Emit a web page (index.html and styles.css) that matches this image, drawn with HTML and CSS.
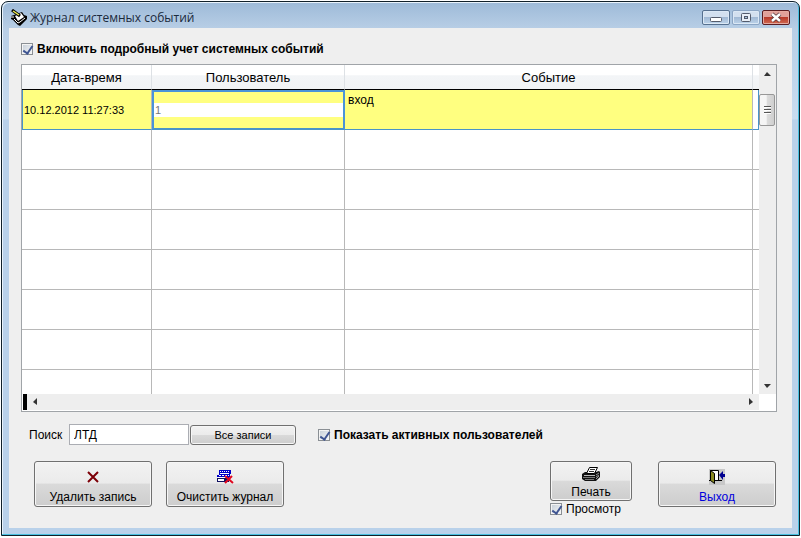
FILE: index.html
```html
<!DOCTYPE html>
<html lang="ru">
<head>
    <meta charset="utf-8">
    <title>Журнал системных событий</title>
    <link rel="stylesheet" href="styles.css">
</head>
<body>
    <div class="window">
        <div class="titlebar">
            <svg class="title-icon" width="18" height="18" viewBox="0 0 18 18">
                <path d="M1 7l3-1 8-3 2 3 3 1v3l-7 7-2-1-5-5-2-1z" fill="#000"/>
                <path d="M5 7l6-3 3 4-6 4z" fill="#fff"/>
                <path d="M4 10l4 4 2-1M10 13l5-4" stroke="#fff" fill="none"/>
                <path d="M1 8h3" stroke="#fff"/>
                <path d="M2 1l8 6" stroke="#000" stroke-width="3"/>
                <path d="M3 2l6 4" stroke="#f0ee50" stroke-width="1.500"/>
            </svg>
            <h1 class="title">Журнал системных событий</h1>
            <div class="window-buttons">
                <button class="win-btn" aria-label="Свернуть">
                    <svg width="26" height="13" viewBox="0 0 26 13"><rect x="7.500" y="6.500" width="11" height="4" rx="1" fill="#fff" stroke="#555c6b"/></svg>
                </button>
                <button class="win-btn muted" aria-label="Развернуть">
                    <svg width="26" height="13" viewBox="0 0 26 13"><rect x="8.500" y="2.500" width="9" height="8" rx="1" fill="#e8eef6" stroke="#535b6c"/><rect x="11.500" y="5.500" width="3" height="2" fill="#a9c3de" stroke="#535b6c"/></svg>
                </button>
                <button class="win-btn close" aria-label="Закрыть">
                    <svg width="26" height="13" viewBox="0 0 26 13"><path d="M9 3l8 7M17 3l-8 7" stroke="#54343a" stroke-width="4"/><path d="M9 3l8 7M17 3l-8 7" stroke="#fff" stroke-width="2.500"/></svg>
                </button>
            </div>
        </div>

        <div class="client">
            <label class="check bold"><input type="checkbox" checked>Включить подробный учет системных событий</label>

            <div class="grid-frame">
                <div class="grid-view">
                    <table class="grid">
                        <colgroup><col class="col-date"><col class="col-user"><col><col class="col-end"></colgroup>
                        <thead>
                            <tr><th>Дата-время</th><th>Пользователь</th><th>Событие</th><th class="end"></th></tr>
                        </thead>
                        <tbody>
                            <tr class="current">
                                <td class="date">10.12.2012 11:27:33</td>
                                <td class="user"><input class="cell-input" type="text" value="1" aria-label="Пользователь"></td>
                                <td class="event">вход</td>
                                <td class="end"></td>
                            </tr>
                            <tr><td></td><td></td><td></td><td class="end"></td></tr>
                            <tr><td></td><td></td><td></td><td class="end"></td></tr>
                            <tr><td></td><td></td><td></td><td class="end"></td></tr>
                            <tr><td></td><td></td><td></td><td class="end"></td></tr>
                            <tr><td></td><td></td><td></td><td class="end"></td></tr>
                            <tr><td></td><td></td><td></td><td class="end"></td></tr>
                            <tr class="last"><td></td><td></td><td></td><td class="end"></td></tr>
                        </tbody>
                    </table>
                    <div class="vscroll">
                        <svg width="17" height="17" viewBox="0 0 17 17"><path d="M5 11l3-4 4 4z" fill="#333"/></svg>
                        <div class="thumb"><i></i><i></i><i></i></div>
                        <svg class="arrow-end" width="17" height="17" viewBox="0 0 17 17"><path d="M5 7h7l-4 4z" fill="#333"/></svg>
                    </div>
                </div>
                <div class="hscroll">
                    <span class="split"></span>
                    <div class="track">
                        <svg width="17" height="16" viewBox="0 0 17 16"><path d="M10 4v7l-4-3z" fill="#333"/></svg>
                        <svg width="17" height="16" viewBox="0 0 17 16"><path d="M7 4v7l4-3z" fill="#333"/></svg>
                    </div>
                </div>
            </div>

            <div class="search-row">
                <label class="search-label" for="search">Поиск</label>
                <input class="search" id="search" type="text" value="ЛТД">
                <button class="btn small">Все записи</button>
                <label class="check bold"><input type="checkbox" checked>Показать активных пользователей</label>
            </div>

            <div class="actions">
                <button class="btn big">
                    <svg width="16" height="16" viewBox="0 0 16 16"><path d="M3 3l10 10M13 3l-10 10" stroke="#7d0008" stroke-width="2"/></svg>
                    Удалить запись
                </button>
                <button class="btn big">
                    <svg width="18" height="16" viewBox="0 0 18 16">
                        <path d="M3 1h12v4h-1v3h-1v4H2V8h-1V6h2z" fill="#0000c8"/>
                        <path d="M2 9h11v4H1V9z" fill="#101060"/>
                        <path d="M4 2h1v1h-1zM6 2h1v1h-1zM8 2h1v1h-1zM10 2h1v1h-1zM12 2h1v1h-1zM3 6h2v1h-2zM6 6h2v1h-2zM9 6h2v1h-2zM12 6h1v1h-1zM4 4h9v1h-9zM2 8h10v1h-10zM2 10h6v2h-6z" fill="#fff"/>
                        <path d="M9 7l8 7M16 7l-7 7" stroke="#e00820" stroke-width="2" fill="none"/>
                    </svg>
                    Очистить журнал
                </button>
                <div class="print-group">
                    <button class="btn print">
                        <svg width="20" height="16" viewBox="0 0 20 16">
                            <path d="M1 8l3-2h11l3-1 1 1v5l-4 4H4l-3-2z" fill="#111"/>
                            <path d="M5.500 7.500l3-6h8l-3 6z" fill="#fff" stroke="#000"/>
                            <path d="M9 3.500h5M8 5.500h5" stroke="#333"/>
                            <path d="M3 9.500h11" stroke="#b8b8b8"/>
                            <path d="M2 11.500h12M4 13.500h9" stroke="#777"/>
                            <path d="M15 9l3-2M15 11l3-2M15 13l3-3" stroke="#999"/>
                        </svg>
                        Печать
                    </button>
                    <label class="check"><input type="checkbox" checked>Просмотр</label>
                </div>
                <button class="btn big exit">
                    <svg width="16" height="16" viewBox="0 0 16 16">
                        <path d="M0 0h16v16H0z" fill="#c8c8c8"/>
                        <path d="M1.500 1.500h8v10h-8z" fill="#fff" stroke="#000"/>
                        <path d="M0 11.500h3M8 11.500h5" stroke="#000"/>
                        <path d="M1.500 1.500l4 3v10l-4-3z" fill="#8a8a20" stroke="#000"/>
                        <path d="M10 6l4-4v3h2v3h-2v3z" fill="#000090"/>
                    </svg>
                    Выход
                </button>
            </div>
        </div>
    </div>
</body>
</html>
```
FILE: styles.css
```css
* {
    box-sizing: border-box;
}

body {
    margin: 0;
    padding: 1px 1px 2px;
    min-height: 100vh;
    display: flex;
    background: #fff;
    font-family: "Liberation Sans", Arial, sans-serif;
    font-size: 12px;
    color: #000;
}

button,
input {
    font-family: inherit;
    font-size: inherit;
    color: inherit;
    margin: 0;
}

.window {
    flex: 1;
    display: flex;
    flex-direction: column;
    padding: 0 7px 7px;
    border: 1px solid #10202a;
    border-radius: 7px 7px 0 0;
    background: linear-gradient(#9dbad8, #b9cfe6 28px, #c8dcf0 117px, #b9d1ea 118px);
    box-shadow: inset -1px -1px #48c0e0, inset 1px 1px #e9f3fc;
}

/* Title bar */
.titlebar {
    display: flex;
    align-items: center;
    height: 26px;
    padding: 5px 2px 0 1px;
}

.title {
    flex: 1;
    margin: 0 0 0 2px;
    font-family: "Open Sans", "Noto Sans", sans-serif;
    font-size: 12px;
    line-height: 20px;
    font-weight: normal;
    color: #1b2a3c;
}

.window-buttons {
    display: flex;
    gap: 2px;
}

.win-btn {
    width: 28px;
    height: 15px;
    padding: 0;
    display: flex;
    border: 1px solid #56708f;
    border-radius: 2px;
    background: linear-gradient(#d3e0ef 50%, #a2bad5 50%, #bdd3ea);
    box-shadow: inset 0 0 0 1px #dbe8f5;
}

.win-btn.muted {
    border-color: #8ba5c4;
}

.win-btn.close {
    border-color: #5a1c22;
    background: linear-gradient(#e0a09a 45%, #b83a2b 50%, #d06a52);
    box-shadow: inset 0 0 0 1px #e5a9a0;
}

/* Client area */
.client {
    flex: 1;
    padding: 13px 15px 0 12px;
    background: #efefef;
}

.check {
    display: flex;
    align-items: center;
    gap: 4px;
    line-height: 16px;
}

.check input {
    appearance: none;
    width: 12px;
    height: 12px;
    border: 1px solid #8a8f94;
    background: linear-gradient(135deg, #c5cdd6, #f6f8fa);
    box-shadow: inset 0 0 0 1px #f4f4f4;
}

.check input:checked::before {
    content: "";
    display: block;
    width: 4px;
    height: 8px;
    margin-left: 3px;
    border: solid #3f5592;
    border-width: 0 2px 2px 0;
    transform: rotate(35deg);
}

.bold {
    font-weight: bold;
}

/* Event grid */
.grid-frame {
    margin-top: 7px;
    border: 1px solid #a0a4a8;
    background: #fff;
}

.grid-view {
    display: flex;
    height: 329px;
    overflow: hidden;
}

.grid {
    flex: 1;
    table-layout: fixed;
    border-collapse: separate;
    border-spacing: 0;
}

.col-date {
    width: 130px;
}

.col-user {
    width: 193px;
}

.col-end {
    width: 6px;
}

.grid th {
    height: 25px;
    padding: 0;
    border-right: 1px solid #dde1e5;
    border-bottom: 1px solid #000;
    background: linear-gradient(#fff 40%, #f3f5f7 45%, #f1f3f5);
    font-size: 13px;
    font-weight: normal;
}

.grid td {
    height: 40px;
    padding: 0;
    border-right: 1px solid #b8b8b8;
    border-bottom: 1px solid #b8b8b8;
}

.grid .end {
    border-right: none;
}

.grid .last td {
    border-bottom: none;
}

.grid .current td {
    background: #ffff80;
    border-bottom-color: #4a94c8;
}

.grid .current .end {
    background: #fff;
    border-right: 1px solid #4a94c8;
}

.grid .date {
    padding-left: 1px;
    font-size: 11px;
    border-left: 1px solid #4a94c8;
}

.grid .user {
    border: 2px solid #4a94d8;
}

.cell-input {
    display: block;
    width: 100%;
    height: 14px;
    padding: 0 1px;
    border: none;
    background: #fff;
    color: #777;
    font-size: 11px;
}

.grid .event {
    padding: 3px;
    vertical-align: top;
}

/* Scroll bars */
.vscroll {
    display: flex;
    flex-direction: column;
    width: 17px;
    background: #eee;
}

.thumb {
    display: flex;
    flex-direction: column;
    align-items: center;
    justify-content: center;
    gap: 1px;
    width: 16px;
    height: 32px;
    margin-top: 12px;
    border: 1px solid #979797;
    border-radius: 2px;
    background: linear-gradient(90deg, #f5f5f5 45%, #dcdcdc 50%, #cfcfcf);
}

.thumb i {
    width: 7px;
    height: 2px;
    background: #555;
    border-bottom: 1px solid #fff;
}

.arrow-end {
    margin-top: auto;
}

.hscroll {
    display: flex;
    height: 17px;
    padding: 0 17px 1px 1px;
}

.split {
    width: 4px;
    background: #000;
}

.track {
    flex: 1;
    display: flex;
    justify-content: space-between;
    background: #eee;
}

/* Search */
.search-row {
    display: flex;
    align-items: center;
    margin-top: 12px;
    padding-left: 8px;
}

.search-label {
    width: 40px;
}

.search {
    width: 120px;
    height: 21px;
    padding: 0 4px;
    border: 1px solid #abadb3;
    background: #fff;
}

.btn {
    border: 1px solid #707070;
    border-radius: 3px;
    background: linear-gradient(#f2f2f2, #ebebeb 48%, #dadada 50%, #cdcdcd);
    box-shadow: inset 0 0 0 1px #f6f6f6;
}

.btn.small {
    width: 106px;
    height: 20px;
    margin: 0 22px 0 1px;
    padding: 0;
    font-size: 11px;
}

/* Bottom buttons */
.actions {
    display: flex;
    align-items: flex-start;
    gap: 14px;
    margin-top: 16px;
    padding: 0 1px 0 13px;
}

.btn.big,
.btn.print {
    display: flex;
    flex-direction: column;
    align-items: center;
    gap: 4px;
    padding: 0;
    line-height: 16px;
}

.btn.big {
    width: 118px;
    height: 46px;
    padding-top: 7px;
}

.print-group {
    margin-left: auto;
    margin-right: 12px;
}

.btn.print {
    gap: 2px;
    width: 82px;
    height: 40px;
    padding-top: 4px;
}

.exit {
    color: #00d;
}
```
